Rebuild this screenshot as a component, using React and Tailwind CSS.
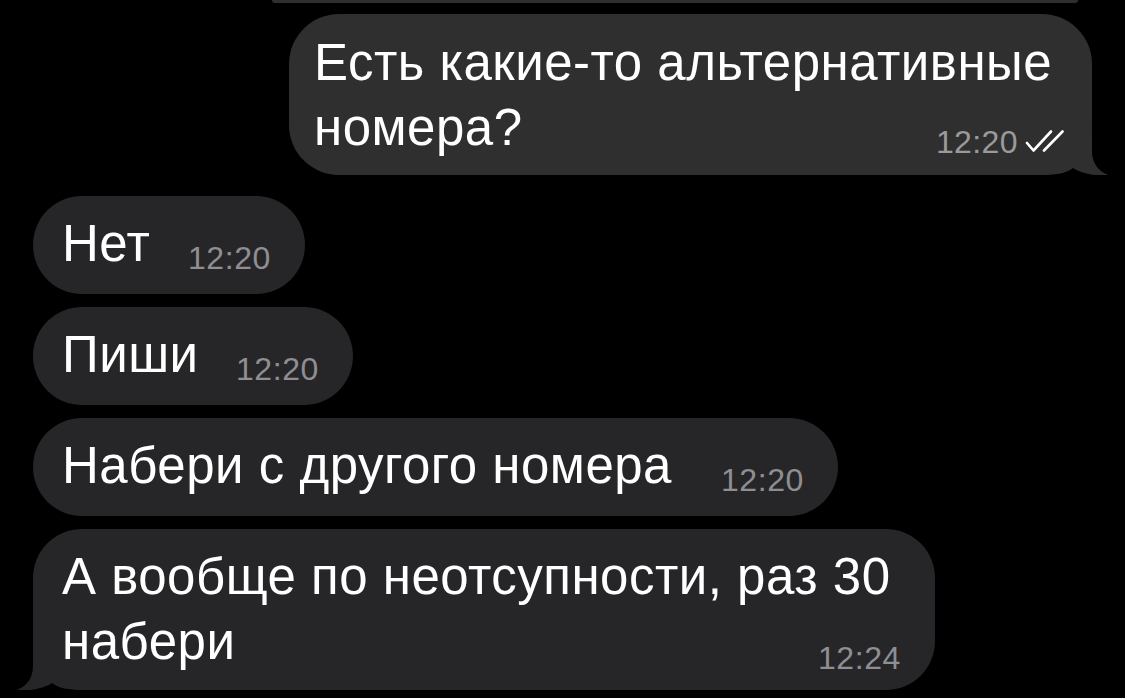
import React from "react";

const FONT = { fontFamily: '"Liberation Sans", Arial, sans-serif' };

function TailRight({ color }) {
  return (
    <svg
      className="absolute right-[-18px] bottom-0"
      width="68"
      height="46"
      viewBox="0 0 68 46"
    >
      <path
        d="M0 0 H50 V22 C50 34 56 42 66 46 C54 47 40 45 31 39 C24 44 16 46 0 46 Z"
        fill={color}
      />
    </svg>
  );
}

function TailLeft({ color }) {
  return (
    <svg
      className="absolute left-[-18px] bottom-0 -scale-x-100"
      width="68"
      height="46"
      viewBox="0 0 68 46"
    >
      <path
        d="M0 0 H50 V22 C50 34 56 42 66 46 C54 47 40 45 31 39 C24 44 16 46 0 46 Z"
        fill={color}
      />
    </svg>
  );
}

function Checks() {
  return (
    <svg width="40" height="24" viewBox="0 0 40 24" className="ml-[7px] mb-[6px] shrink-0">
      <path
        d="M2 13 L8.5 20.5 L26 1.5"
        fill="none"
        stroke="#ffffff"
        strokeWidth="2.6"
        strokeLinecap="round"
        strokeLinejoin="round"
      />
      <path
        d="M19 20.5 L37.5 1.5"
        fill="none"
        stroke="#ffffff"
        strokeWidth="2.6"
        strokeLinecap="round"
      />
    </svg>
  );
}

const MSG = "text-[51px] leading-[65px] text-white tracking-[0.5px] whitespace-nowrap";
const TIME = "shrink-0 text-[32px] leading-[36px] text-[#8e8e93] tracking-[0.6px]";

function Received({ width, first, children, time, tail }) {
  return (
    <div
      className={`relative bg-[#262628] rounded-[49px] pl-[29px] pr-[34px] pt-[15px] ${
        first ? "h-[161px]" : "h-[98px]"
      }`}
      style={{ width }}
    >
      {tail && <TailLeft color="#262628" />}
      <div className="relative">
        {first && <div className={MSG}>{first}</div>}
        <div className="flex items-end justify-between">
          <span className={MSG}>{children}</span>
          <span className={`${TIME} ${first ? "relative top-[2px]" : ""}`}>{time}</span>
        </div>
      </div>
    </div>
  );
}

export default function App() {
  return (
    <div
      className="w-[1125px] h-[698px] bg-black overflow-hidden flex flex-col"
      style={FONT}
    >
      <div className="ml-[272px] w-[806px] h-[3px] bg-[#2f2f2f] rounded-b-[3px]" />

      <div className="relative self-end mr-[33px] mt-[11px] w-[803px] h-[161px] bg-[#2f2f2f] rounded-[50px] pl-[25px] pr-[27px] pt-[16px]">
        <TailRight color="#2f2f2f" />
        <div className="relative">
          <div className={MSG}>Есть какие-то альтернативные</div>
          <div className="flex items-end justify-between">
            <span className={MSG}>номера?</span>
            <span className="flex items-end shrink-0">
              <span className="text-[32px] leading-[36px] text-[#9a9a9a] tracking-[0.4px]">
                12:20
              </span>
              <Checks />
            </span>
          </div>
        </div>
      </div>

      <div className="flex flex-col gap-[13px] mt-[21px] ml-[33px]">
        <Received width={272} time="12:20">
          Нет
        </Received>
        <Received width={320} time="12:20">
          Пиши
        </Received>
        <Received width={805} time="12:20">
          Набери с другого номера
        </Received>
        <Received width={902} time="12:24" tail first="А вообще по неотсупности, раз 30">
          набери
        </Received>
      </div>
    </div>
  );
}
